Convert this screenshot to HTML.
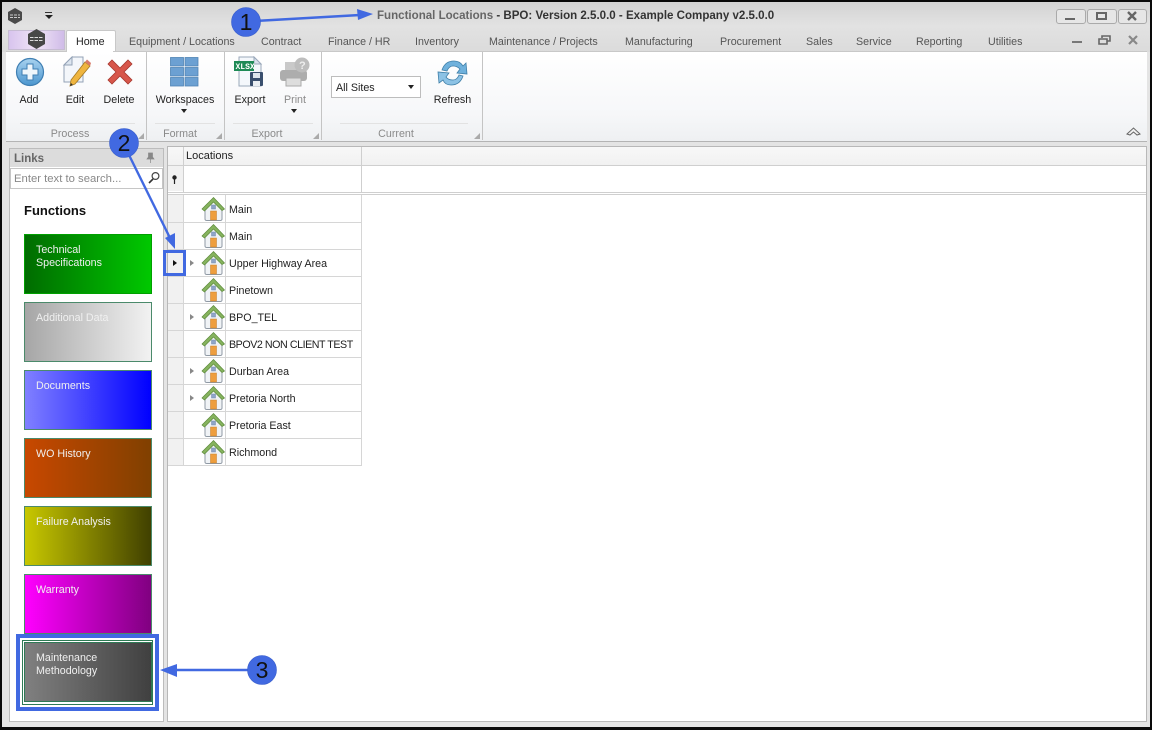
<!DOCTYPE html>
<html><head><meta charset="utf-8"><title>Functional Locations</title>
<style>
html,body{margin:0;padding:0;background:#000}
#p{position:relative;width:1152px;height:730px;overflow:hidden;background:#e4e4e4;font-family:"Liberation Sans",sans-serif;font-size:10.7px;color:#222}
#p div,#p span.t{position:absolute;white-space:nowrap}
.t{position:absolute;white-space:nowrap;line-height:14px}
.tab{top:34px;color:#555}
.c{text-align:center}
.g{color:#8a8a8a}
.sep{position:absolute;top:52px;width:1px;height:88px;background:#c4c4c4}
.gl{position:absolute;top:123px;height:1px;background:#e2e2e2}
.card{left:24px;width:126px;height:58px;border:1px solid #4b8a6b;color:#f0f0f0;line-height:13px}
.card span{position:absolute;left:11px;top:8px;white-space:nowrap}
.rl{position:absolute;left:168px;width:193px;height:1px;background:#d6d6d6}
.n{position:absolute;left:229px;color:#222;white-space:nowrap;line-height:14px}
.ic{position:absolute;left:201px;width:24px;height:26px}
.ex{position:absolute;left:190px;width:0;height:0;border-left:4px solid #888;border-top:3px solid transparent;border-bottom:3px solid transparent}
</style></head><body>
<div id="p">
<svg width="0" height="0" style="position:absolute"><defs>
<symbol id="h" viewBox="0 0 24 26">
<path d="M4 11 V23 Q4 24.5 6 24.5 H19 Q21 24.5 21 23 V11 L12.5 3Z" fill="#f0f3f6" stroke="#8f99a4"/>
<path d="M1 13 L12.5 1.5 L23.5 13 L21 14.5 L12.5 6 L3.5 15Z" fill="#86b35e" stroke="#5c8a3a" stroke-width=".7"/>
<rect x="10.5" y="9" width="4" height="4" fill="#8fa5c8" stroke="#7187ab" stroke-width=".5"/>
<rect x="9.5" y="15" width="6" height="9" fill="#ee9e3e" stroke="#c47c28" stroke-width=".5"/>
</symbol>
</defs></svg>

<!-- title area -->
<div style="left:0;top:0;width:1152px;height:52px;background:linear-gradient(#d2d2d2,#e2e2e2 50%,#dbdbdb)"></div>
<svg style="position:absolute;left:7px;top:8px" width="16" height="16"><path d="M8 0 L15 4 V12 L8 16 L1 12 V4Z" fill="#4a4a4a"/><path d="M3 7 H13 M3 9.5 H13" stroke="#ccc" stroke-dasharray="3 1"/></svg>
<div style="left:45px;top:12px;width:7px;height:1px;background:#333"></div>
<div style="left:45px;top:15px;width:0;height:0;border-left:4px solid transparent;border-right:4px solid transparent;border-top:4px solid #222"></div>
<span class="t" style="left:377px;top:9px;font-size:11.55px;font-weight:bold;color:#333"><span style="color:#666">Functional Locations</span> - BPO: Version 2.5.0.0 - Example Company v2.5.0.0</span>

<!-- window buttons -->
<div style="left:1056px;top:9px;width:28px;height:13px;border:1px solid #aaa;border-radius:3px;background:#e6e6e6"></div>
<div style="left:1065px;top:18px;width:10px;height:2px;background:#666"></div>
<div style="left:1087px;top:9px;width:28px;height:13px;border:1px solid #aaa;border-radius:3px;background:#e6e6e6"></div>
<div style="left:1096px;top:12px;width:7px;height:4px;border:2px solid #666"></div>
<div style="left:1118px;top:9px;width:27px;height:13px;border:1px solid #aaa;border-radius:3px;background:#e6e6e6"></div>
<svg style="position:absolute;left:1126px;top:11px" width="12" height="10"><path d="M2 1 L10 9 M10 1 L2 9" stroke="#666" stroke-width="2.4"/></svg>
<div style="left:1072px;top:41px;width:10px;height:2px;background:#777"></div>
<svg style="position:absolute;left:1098px;top:35px" width="13" height="11"><path d="M4 3 V1 H12 V6 H9 M1 4 H9 V9 H1Z" fill="none" stroke="#666" stroke-width="1.6"/></svg>
<svg style="position:absolute;left:1127px;top:35px" width="12" height="10"><path d="M2 1 L10 9 M10 1 L2 9" stroke="#888" stroke-width="2.2"/></svg>

<!-- app button -->
<div style="left:8px;top:30px;width:55px;height:18px;background:linear-gradient(90deg,#d8c4ee,#f0e4f6 50%,#d0bce8);border:1px solid #c6bcd2"></div>
<svg style="position:absolute;left:27px;top:29px" width="19" height="20"><path d="M9.5 0 L18 5 V15 L9.5 20 L1 15 V5Z" fill="#474747"/><path d="M3 8.5 H16 M3 11.5 H16" stroke="#ddd" stroke-dasharray="3.5 1"/></svg>

<!-- tabs -->
<div style="left:66px;top:30px;width:48px;height:22px;background:#fff;border:1px solid #c8c8c8;border-bottom:none;border-radius:2px 2px 0 0"></div>
<span class="t" style="left:76px;top:35px;color:#222">Home</span>
<span class="t tab" style="left:129px;top:35px">Equipment / Locations</span>
<span class="t tab" style="left:261px;top:35px">Contract</span>
<span class="t tab" style="left:328px;top:35px">Finance / HR</span>
<span class="t tab" style="left:415px;top:35px">Inventory</span>
<span class="t tab" style="left:489px;top:35px">Maintenance / Projects</span>
<span class="t tab" style="left:625px;top:35px">Manufacturing</span>
<span class="t tab" style="left:720px;top:35px">Procurement</span>
<span class="t tab" style="left:806px;top:35px">Sales</span>
<span class="t tab" style="left:856px;top:35px">Service</span>
<span class="t tab" style="left:916px;top:35px">Reporting</span>
<span class="t tab" style="left:988px;top:35px">Utilities</span>

<!-- ribbon -->
<div style="left:6px;top:51px;width:1141px;height:89px;background:linear-gradient(#fff,#f6f7f9 70%,#eef0f2);border-top:1px solid #c8c8c8;border-bottom:1px solid #b4b4b4;z-index:0"></div>
<div style="left:67px;top:50px;width:46px;height:3px;background:#fff"></div>
<div class="sep" style="left:146px"></div><div class="sep" style="left:224px"></div><div class="sep" style="left:321px"></div><div class="sep" style="left:482px"></div>
<div class="gl" style="left:20px;width:115px"></div><div class="gl" style="left:155px;width:60px"></div><div class="gl" style="left:233px;width:80px"></div><div class="gl" style="left:340px;width:128px"></div>

<!-- Add -->
<svg style="position:absolute;left:15px;top:57px" width="30" height="30"><defs><linearGradient id="a" x1="0" y1="0" x2="0" y2="1"><stop offset="0" stop-color="#a8d2ef"/><stop offset="1" stop-color="#4b96cf"/></linearGradient></defs><circle cx="15" cy="15" r="13.5" fill="url(#a)" stroke="#3f7fb3" stroke-width="1.2"/><path d="M12 7 H18 V12 H23 V18 H18 V23 H12 V18 H7 V12 H12Z" fill="#eef6fb" stroke="#3f7fb3"/></svg>
<!-- Edit -->
<svg style="position:absolute;left:62px;top:56px" width="30" height="32"><path d="M2 9 L10 1 H21 V26 H2Z" fill="#f3f6fa" stroke="#93a2b6"/><path d="M2 9 H10 V1Z" fill="#dce5ef" stroke="#93a2b6"/><path d="M9 24 L23 6 L28 10 L13 28 L8 30Z" fill="#efb53f" stroke="#a67a25" stroke-width=".8"/><path d="M23 6 L25 3.5 L29 7 L28 10Z" fill="#d87a6a"/><path d="M9 27 L8 30 L11 29Z" fill="#333"/></svg>
<!-- Delete -->
<svg style="position:absolute;left:106px;top:59px" width="28" height="26"><path d="M2 5 L6 1 L14 9 L22 1 L26 5 L18 13 L26 21 L22 25 L14 17 L6 25 L2 21 L10 13Z" fill="#d7564a" stroke="#a8382f" stroke-width=".8"/></svg>
<span class="t c" style="left:9px;width:40px;top:93px">Add</span>
<span class="t c" style="left:55px;width:40px;top:93px">Edit</span>
<span class="t c" style="left:99px;width:40px;top:93px">Delete</span>
<span class="t c g" style="left:30px;width:80px;top:127px">Process</span>
<svg style="position:absolute;left:138px;top:133px" width="6" height="6"><path d="M0 6 L6 6 L6 0Z" fill="#aaa"/></svg>

<!-- Workspaces -->
<svg style="position:absolute;left:170px;top:57px" width="29" height="30"><g fill="#6ca0d2" stroke="#4f83b5" stroke-width=".8"><rect x=".5" y=".5" width="13" height="8.5"/><rect x="15" y=".5" width="13" height="8.5"/><rect x=".5" y="10.5" width="13" height="8.5"/><rect x="15" y="10.5" width="13" height="8.5"/><rect x=".5" y="20.5" width="13" height="8.5"/><rect x="15" y="20.5" width="13" height="8.5"/></g></svg>
<span class="t c" style="left:150px;width:70px;top:93px">Workspaces</span>
<div style="left:181px;top:109px;width:0;height:0;border-left:3.5px solid transparent;border-right:3.5px solid transparent;border-top:4px solid #222"></div>
<span class="t c g" style="left:150px;width:60px;top:127px">Format</span>
<svg style="position:absolute;left:216px;top:133px" width="6" height="6"><path d="M0 6 L6 6 L6 0Z" fill="#aaa"/></svg>

<!-- Export -->
<svg style="position:absolute;left:233px;top:56px" width="32" height="32"><path d="M6 1 H21 L28 8 V30 H6Z" fill="#f4f7fb" stroke="#9aa8ba"/><path d="M21 1 V8 H28Z" fill="#d9e2ec" stroke="#9aa8ba"/><rect x="1" y="5" width="20" height="10" fill="#1e8a55"/><text x="2.5" y="13" font-family="Liberation Mono,monospace" font-weight="bold" font-size="8" fill="#fff">XLSX</text><rect x="17" y="16" width="13" height="14" rx="1" fill="#3a4f6e"/><rect x="20" y="17" width="7" height="5" fill="#dfe6ee"/><rect x="20" y="25" width="7" height="5" fill="#e9edf2"/></svg>
<span class="t c" style="left:230px;width:40px;top:93px">Export</span>
<!-- Print -->
<svg style="position:absolute;left:279px;top:56px" width="32" height="32"><rect x="6" y="6" width="18" height="10" fill="#c9c9c9"/><rect x="1" y="14" width="27" height="11" rx="3" fill="#adadad"/><rect x="7" y="22" width="15" height="8" fill="#ddd" stroke="#aaa"/><circle cx="23" cy="9" r="7.5" fill="#bdbdbd"/><text x="20" y="13" font-family="Liberation Sans,sans-serif" font-weight="bold" font-size="11" fill="#eee">?</text></svg>
<span class="t c g" style="left:275px;width:40px;top:93px">Print</span>
<div style="left:291px;top:109px;width:0;height:0;border-left:3.5px solid transparent;border-right:3.5px solid transparent;border-top:4px solid #222"></div>
<span class="t c g" style="left:237px;width:60px;top:127px">Export</span>
<svg style="position:absolute;left:313px;top:133px" width="6" height="6"><path d="M0 6 L6 6 L6 0Z" fill="#aaa"/></svg>

<!-- Sites -->
<div style="left:331px;top:76px;width:88px;height:20px;background:#fff;border:1px solid #bdbdbd"></div>
<span class="t" style="left:336px;top:81px">All Sites</span>
<div style="left:408px;top:85px;width:0;height:0;border-left:3.5px solid transparent;border-right:3.5px solid transparent;border-top:4px solid #222"></div>
<span class="t c g" style="left:366px;width:60px;top:127px">Current</span>
<svg style="position:absolute;left:474px;top:133px" width="6" height="6"><path d="M0 6 L6 6 L6 0Z" fill="#aaa"/></svg>
<!-- Refresh -->
<svg style="position:absolute;left:436px;top:58px" width="34" height="30"><path d="M6 12 Q9 3 18 3 Q24 3 27 8 L30 5 L31 16 L21 15 L24 11 Q21 8 17 8 Q13 8 11 13Z" fill="#6fb1dc" stroke="#3f7fa8" stroke-width=".8"/><path d="M27 18 Q24 27 15 27 Q9 27 7 22 L3 25 L2 14 L13 15 L10 19 Q12 22 17 22 Q21 22 23 17Z" fill="#8cc2e5" stroke="#3f7fa8" stroke-width=".8"/></svg>
<span class="t c" style="left:430px;width:45px;top:93px">Refresh</span>
<svg style="position:absolute;left:1126px;top:126px" width="15" height="10"><path d="M1 8 L7.5 2 L14 8 L11 9 L7.5 6 L4 9Z" fill="#f0f0f0" stroke="#666"/></svg>

<!-- left panel -->
<div style="left:9px;top:148px;width:155px;height:574px;background:#fff;border:1px solid #bcbcbc;box-sizing:border-box"></div>
<div style="left:10px;top:149px;width:153px;height:18px;background:#dcdcdc"></div>
<span class="t" style="left:14px;top:152px;font-weight:bold;color:#666;font-size:11.5px">Links</span>
<svg style="position:absolute;left:146px;top:152px" width="9" height="11"><path d="M2.5 1 H6.5 V5 L8 7 H1 L2.5 5Z M4.5 7 V11" fill="#888" stroke="#888" stroke-width=".7"/></svg>
<div style="left:10px;top:168px;width:151px;height:19px;background:#fff;border:1px solid #c6c6c6"></div>
<span class="t" style="left:14px;top:172px;color:#888;font-size:11.3px">Enter text to search...</span>
<svg style="position:absolute;left:147px;top:171px" width="14" height="14"><circle cx="8.5" cy="5" r="3.4" fill="none" stroke="#444" stroke-width="1.2"/><path d="M6 8 L2 12" stroke="#333" stroke-width="1.6"/></svg>
<span class="t" style="left:24px;top:204px;font-weight:bold;font-size:13px;color:#111">Functions</span>

<div class="card" style="top:234px;background:linear-gradient(90deg,#006c00,#00c800);border-color:#00a000"><span style="top:9px">Technical<br>Specifications</span></div>
<div class="card" style="top:302px;background:linear-gradient(90deg,#a6a6a6,#f2f2f2)"><span style="top:9px">Additional Data</span></div>
<div class="card" style="top:370px;background:linear-gradient(90deg,#8080ff,#0000ff)"><span style="top:9px">Documents</span></div>
<div class="card" style="top:438px;background:linear-gradient(90deg,#c84800,#804000)"><span style="top:9px">WO History</span></div>
<div class="card" style="top:506px;background:linear-gradient(90deg,#c8c800,#404000)"><span style="top:9px">Failure Analysis</span></div>
<div class="card" style="top:574px;background:linear-gradient(90deg,#ff00ff,#800080)"><span style="top:9px">Warranty</span></div>
<div class="card" style="top:642px;background:linear-gradient(90deg,#808080,#404040);border-color:#2e7a55"><span style="top:9px">Maintenance<br>Methodology</span></div>

<!-- grid -->
<div style="left:167px;top:146px;width:980px;height:576px;background:#fff;border:1px solid #b8b8b8;box-sizing:border-box"></div>
<div style="left:168px;top:147px;width:15px;height:44px;background:#f1f1f1"></div>
<div style="left:168px;top:147px;width:978px;height:18px;background:linear-gradient(#f8f8f8,#f1f1f1)"></div>
<div style="left:168px;top:165px;width:978px;height:1px;background:#cfcfcf"></div>
<div style="left:168px;top:166px;width:15px;height:25px;background:#f1f1f1"></div>
<div style="left:168px;top:192px;width:978px;height:1px;background:#cfcfcf"></div>
<div style="left:168px;top:194px;width:978px;height:1px;background:#cfcfcf"></div>
<div style="left:183px;top:147px;width:1px;height:45px;background:#cfcfcf"></div>
<div style="left:361px;top:147px;width:1px;height:45px;background:#cfcfcf"></div>
<span class="t" style="left:186px;top:149px;font-size:11px">Locations</span>
<svg style="position:absolute;left:171px;top:175px" width="7" height="9"><circle cx="3.5" cy="2.5" r="2.2" fill="#222"/><path d="M3.5 4 V9" stroke="#222" stroke-width="1.2"/></svg>

<div style="left:168px;top:195px;width:15px;height:271px;background:#f1f1f1"></div>
<div style="left:183px;top:195px;width:1px;height:271px;background:#d6d6d6"></div>
<div style="left:225px;top:195px;width:1px;height:271px;background:#d6d6d6"></div>
<div style="left:361px;top:195px;width:1px;height:271px;background:#d6d6d6"></div>
<div class="rl" style="top:222px"></div><div class="rl" style="top:249px"></div><div class="rl" style="top:276px"></div><div class="rl" style="top:303px"></div><div class="rl" style="top:330px"></div><div class="rl" style="top:357px"></div><div class="rl" style="top:384px"></div><div class="rl" style="top:411px"></div><div class="rl" style="top:438px"></div><div class="rl" style="top:465px"></div>

<svg class="ic" style="top:196px"><use href="#h"/></svg><span class="n" style="top:203px">Main</span>
<svg class="ic" style="top:223px"><use href="#h"/></svg><span class="n" style="top:230px">Main</span>
<svg class="ic" style="top:250px"><use href="#h"/></svg><span class="n" style="top:257px">Upper Highway Area</span>
<svg class="ic" style="top:277px"><use href="#h"/></svg><span class="n" style="top:284px">Pinetown</span>
<svg class="ic" style="top:304px"><use href="#h"/></svg><span class="n" style="top:311px">BPO_TEL</span>
<svg class="ic" style="top:331px"><use href="#h"/></svg><span class="n" style="top:338px;letter-spacing:-.45px">BPOV2 NON CLIENT TEST</span>
<svg class="ic" style="top:358px"><use href="#h"/></svg><span class="n" style="top:365px">Durban Area</span>
<svg class="ic" style="top:385px"><use href="#h"/></svg><span class="n" style="top:392px">Pretoria North</span>
<svg class="ic" style="top:412px"><use href="#h"/></svg><span class="n" style="top:419px">Pretoria East</span>
<svg class="ic" style="top:439px"><use href="#h"/></svg><span class="n" style="top:446px">Richmond</span>
<div class="ex" style="top:260px"></div><div class="ex" style="top:314px"></div><div class="ex" style="top:368px"></div><div class="ex" style="top:395px"></div>
<div style="left:173px;top:260px;width:0;height:0;border-left:4px solid #111;border-top:3.5px solid transparent;border-bottom:3.5px solid transparent"></div>

<!-- annotations -->
<div style="left:163px;top:250px;width:23px;height:26px;border:3px solid #4169e1;box-sizing:border-box"></div>
<div style="left:16px;top:634px;width:143px;height:77px;border:4px solid #4169e1;box-sizing:border-box"></div>
<div style="left:22px;top:640px;width:131px;height:65px;border:1px solid #2e7a55;box-sizing:border-box;outline:1px solid #fff"></div>
<svg style="position:absolute;left:0;top:0" width="1152" height="730">
<g stroke="#4169e1" stroke-width="2.4" fill="#4169e1">
<path d="M255 21 L360 15" fill="none"/><path d="M373 14 L357 9 L358 20Z" stroke="none"/>
<path d="M128 153 L171 240" fill="none"/><path d="M175 249 L175 233 L165 238Z" stroke="none"/>
<path d="M175 670 H255" fill="none"/><path d="M160 670 L177 664 V677Z" stroke="none"/>
<g stroke="#3a5fcc" stroke-width=".6"><circle cx="246" cy="22" r="14.5"/><circle cx="124" cy="143" r="14.5"/><circle cx="262" cy="670" r="14.5"/></g>
</g>
<g font-family="Liberation Sans,sans-serif" font-size="23" fill="#111" text-anchor="middle"><text x="246" y="30">1</text><text x="124" y="151">2</text><text x="262" y="678">3</text></g>
</svg>

<!-- outer border -->
<div style="left:0;top:0;width:1152px;height:730px;border:solid #0a0a0a;border-width:2px 2px 3px 2px;box-sizing:border-box"></div>
</div>
</body></html>
